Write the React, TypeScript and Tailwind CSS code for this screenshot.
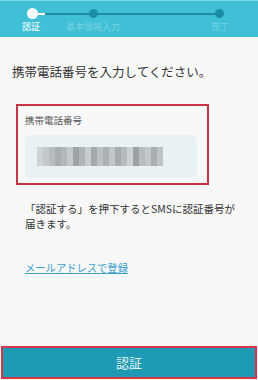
import React from "react";

const jp = { fontFamily: '"Noto Sans CJK JP", "Noto Sans", sans-serif' };

const shades = [
  "#cfd3d5", "#c4c8ca", "#b8bcbe", "#a9adaf", "#b4b8ba", "#c6cacc", "#9fa3a5",
  "#b0b4b6", "#c8cccd", "#a4a8aa", "#bcc0c2", "#aeb2b4", "#c2c6c8", "#a8acae",
  "#b6babc", "#cdd1d3", "#9da1a3", "#b9bdbf", "#c4c8ca", "#aaaeb0", "#bfc3c5",
];

export default function App() {
  return (
    <div className="w-[258px] h-[380px] bg-[#f8f8f8] flex flex-col overflow-hidden" style={jp}>
      {/* header stepper */}
      <div className="h-[37px] bg-[#40c0d6] border-t border-[#7fd6e6] relative shrink-0">
        <div className="absolute left-[32px] top-[12px] w-[187px] h-[1.5px] bg-[#1b8ea6]" />
        <div className="absolute left-[32px] top-[12px] w-[13px] h-[1.5px] bg-white" />
        <div className="absolute left-[27px] top-[7px] w-[11px] h-[11px] rounded-full bg-white" />
        <div className="absolute left-[89px] top-[8px] w-[9px] h-[9px] rounded-full bg-[#1b8ea6]" />
        <div className="absolute left-[215px] top-[8px] w-[9px] h-[9px] rounded-full bg-[#1b8ea6]" />
        <div className="absolute left-[22px] top-[20px] text-[9px] leading-[12px] text-white">認証</div>
        <div className="absolute left-[66px] top-[20px] text-[9px] leading-[12px] text-white/30">基本情報入力</div>
        <div className="absolute left-[211px] top-[20px] text-[9px] leading-[12px] text-white/30">完了</div>
      </div>

      <div className="px-[12px] pt-[26px]">
        <div className="text-[12.5px] leading-[18px] text-[#333]">携帯電話番号を入力してください。</div>
      </div>

      <div className="ml-[16px] mt-[23px] w-[193px] h-[81px] border-2 border-[#c93444] px-[7px] pt-[8px]">
        <div className="text-[9.5px] leading-[13px] text-[#555]">携帯電話番号</div>
        <div className="mt-[8px] w-[172px] h-[43px] rounded-[6px] bg-[#e8f1f3] flex items-center pl-[12px]">
          <div className="flex h-[19px] blur-[0.5px]">
            {shades.map((c, i) => (
              <div key={i} className="w-[6px] h-full" style={{ backgroundColor: c }} />
            ))}
          </div>
        </div>
      </div>

      <div className="pl-[25px] pr-[16px] mt-[16px] text-[10.5px] leading-[15px] text-[#333]">
        「認証する」を押下するとSMSに認証番号が<br />届きます。
      </div>

      <div className="pl-[25px] mt-[22px]">
        <span className="text-[10.3px] leading-[14px] text-[#3a9fd0] underline">メールアドレスで登録</span>
      </div>

      <div className="flex-1" />

      <div className="mx-[1px] mb-[1px] h-[33px] border-2 border-[#d9344a] bg-[#1f9ab4] flex items-center justify-center">
        <span className="text-[13px] text-[#e6f6f9]">認証</span>
      </div>
    </div>
  );
}
